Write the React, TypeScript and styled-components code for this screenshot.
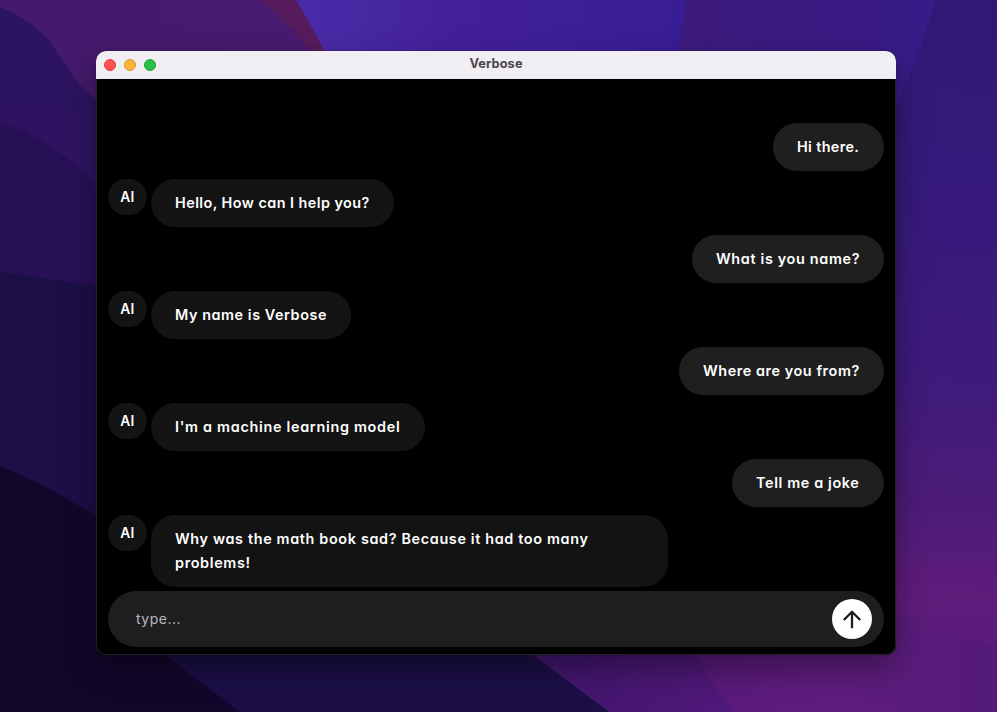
import React from "react";
import styled, { createGlobalStyle } from "styled-components";

const GlobalStyle = createGlobalStyle`
  * { box-sizing: border-box; }
  body { margin: 0; background: #1c0f45; overflow: hidden; }
`;

const Desktop = styled.div`
  display: grid;
  width: 997px;
  height: 712px;
  overflow: hidden;
  font-family: Inter, "Noto Sans", sans-serif;
  > * { grid-area: 1 / 1; }
`;

const WallpaperArt = styled.svg`
  display: block;
  width: 997px;
  height: 712px;
`;

const Window = styled.main`
  z-index: 1;
  margin: 51px 0 0 96px;
  width: 800px;
  height: 604px;
  display: flex;
  flex-direction: column;
  border-radius: 10px;
  overflow: hidden;
  background: #000;
  box-shadow: 0 0 1px rgba(0, 0, 0, 0.7), 0 14px 32px rgba(0, 0, 0, 0.38);
`;

const TitleBar = styled.header`
  display: grid;
  grid-template-columns: 1fr auto 1fr;
  height: 28px;
  flex: none;
  padding: 0 8px;
  align-items: center;
  background: #f0edf3;
`;

const Lights = styled.div`
  display: flex;
  gap: 8px;
`;

const Light = styled.span<{ $fill: string; $edge: string }>`
  width: 12px;
  height: 12px;
  border-radius: 50%;
  background: ${(p) => p.$fill};
  border: 1px solid ${(p) => p.$edge};
`;

const Title = styled.h1`
  margin: 0 0 3px;
  font-size: 12.8px;
  line-height: 16px;
  font-weight: 700;
  letter-spacing: 0.1px;
  color: #4a484d;
`;

const Body = styled.div`
  flex: 1;
  display: flex;
  flex-direction: column;
  gap: 4px;
  padding: 44px 11px 7px;
  border: 1px solid #222;
  border-top: 0;
  border-radius: 0 0 10px 10px;
`;

const Thread = styled.div`
  flex: none;
  display: flex;
  flex-direction: column;
  gap: 8px;
`;

const Row = styled.div<{ $mine: boolean }>`
  display: flex;
  align-items: flex-start;
  gap: 4px;
  justify-content: ${(p) => (p.$mine ? "flex-end" : "flex-start")};
`;

const Avatar = styled.span`
  width: 39px;
  height: 36px;
  padding-bottom: 1px;
  border-radius: 18px;
  flex: none;
  display: flex;
  align-items: center;
  justify-content: center;
  background: #131313;
  color: #fff;
  font-size: 13.8px;
  font-weight: 600;
  letter-spacing: 0.3px;
`;

const Bubble = styled.p<{ $mine: boolean; $width: number; $tracking: number }>`
  margin: 0;
  width: ${(p) => p.$width}px;
  padding: 12px 0 12px 24px;
  border-radius: 24px;
  background: ${(p) => (p.$mine ? "#1f1f1f" : "#131313")};
  color: #fff;
  font-size: 14.4px;
  line-height: 24px;
  font-weight: 600;
  font-feature-settings: "cv11";
  letter-spacing: ${(p) => p.$tracking}px;
  white-space: pre;
`;

const Composer = styled.form`
  flex: none;
  display: flex;
  align-items: center;
  height: 56px;
  padding: 0 12px 0 28px;
  border-radius: 28px;
  background: #1e1e1e;
`;

const Field = styled.input`
  flex: 1;
  padding: 0;
  border: 0;
  outline: 0;
  background: transparent;
  color: #fff;
  font: 400 14px/24px Inter, sans-serif;
  letter-spacing: 0.5px;
  &::placeholder { color: #bab6c3; opacity: 1; }
`;

const Send = styled.button`
  width: 40px;
  height: 40px;
  padding: 0;
  border: 0;
  border-radius: 50%;
  display: flex;
  align-items: center;
  justify-content: center;
  background: #fff;
  color: #1e1e1e;
`;

type Message = { mine: boolean; text: string; width: number; tracking: number };

const messages: Message[] = [
  { mine: true, text: "Hi there.", width: 111, tracking: 0.36 },
  { mine: false, text: "Hello, How can I help you?", width: 243, tracking: 0.45 },
  { mine: true, text: "What is you name?", width: 192, tracking: 0.66 },
  { mine: false, text: "My name is Verbose", width: 200, tracking: 0.56 },
  { mine: true, text: "Where are you from?", width: 205, tracking: 0.57 },
  { mine: false, text: "I'm a machine learning model", width: 274, tracking: 0.7 },
  { mine: true, text: "Tell me a joke", width: 152, tracking: 0.63 },
  { mine: false, text: "Why was the math book sad? Because it had too many\nproblems!", width: 517, tracking: 0.65 },
];

const Wallpaper = () => (
  <WallpaperArt viewBox="0 0 997 712" aria-hidden="true">
    <defs>
      <linearGradient id="plum" x1="0" y1="0" x2="1" y2="0">
        <stop offset="0" stopColor="#431a6c" />
        <stop offset="1" stopColor="#4b1b70" />
      </linearGradient>
      <linearGradient id="blue" gradientUnits="userSpaceOnUse" x1="300" y1="0" x2="690" y2="0">
        <stop offset="0" stopColor="#4a2ca8" />
        <stop offset=".4" stopColor="#43209a" />
        <stop offset="1" stopColor="#371d94" />
      </linearGradient>
      <linearGradient id="indigo" gradientUnits="userSpaceOnUse" x1="680" y1="0" x2="940" y2="0">
        <stop offset="0" stopColor="#3d1b7c" />
        <stop offset="1" stopColor="#381b88" />
      </linearGradient>
      <linearGradient id="right" gradientUnits="userSpaceOnUse" x1="960" y1="0" x2="900" y2="620">
        <stop offset="0" stopColor="#301876" />
        <stop offset=".35" stopColor="#371a7c" />
        <stop offset=".6" stopColor="#3e1b7b" />
        <stop offset=".8" stopColor="#4c1c78" />
        <stop offset="1" stopColor="#621d7c" />
      </linearGradient>
      <linearGradient id="violet" gradientUnits="userSpaceOnUse" x1="560" y1="0" x2="997" y2="0">
        <stop offset="0" stopColor="#441668" />
        <stop offset=".4" stopColor="#5b1b7c" />
        <stop offset=".65" stopColor="#5f1d7f" />
        <stop offset="1" stopColor="#541b78" />
      </linearGradient>
      <linearGradient id="dusk" x1="0" y1="0" x2="0" y2="1">
        <stop offset="0" stopColor="#2b1460" />
        <stop offset="1" stopColor="#321363" />
      </linearGradient>
    </defs>
    <rect width="500" height="300" fill="url(#plum)" />
    <path d="M260 0H300L330 60H318Q292 26 260 0Z" fill="#561b5d" />
    <path d="M296 0H700V100H348Q322 42 296 0Z" fill="url(#blue)" />
    <path d="M686 0H960V150H664Z" fill="url(#indigo)" />
    <path d="M935 0H997V712H850V180L896 108Q922 50 935 0Z" fill="url(#right)" />
    <path d="M850 562Q930 568 997 569V650H850Z" fill="#65197b" opacity=".3" />
    <path d="M850 614Q930 615 997 612V650H850Z" fill="#4b1b7b" opacity=".25" />
    <path d="M480 615H850Q890 620 920 630Q960 640 997 643V712H480Z" fill="url(#violet)" />
    <path d="M500 640H690Q708 685 735 712H500Z" fill="#3f1877" opacity=".35" />
    <path d="M0 7Q35 22 51 43Q62 60 76 80Q86 93 97 101L130 130V350H0Z" fill="url(#dusk)" />
    <path d="M0 122Q50 136 96 186L130 230V350H0Z" fill="#281056" />
    <path d="M0 272L97 286L300 370L510 638L609 712H0Z" fill="#1b0f46" />
    <path d="M0 466Q50 487 96 516L165 655L240 712H0Z" fill="#12072b" />
  </WallpaperArt>
);

export default function App() {
  return (
    <>
      <GlobalStyle />
      <Desktop>
        <Wallpaper />
        <Window>
          <TitleBar>
            <Lights>
              <Light $fill="#ff514f" $edge="#e13d3d" />
              <Light $fill="#fdb339" $edge="#d99429" />
              <Light $fill="#2bc043" $edge="#1fa032" />
            </Lights>
            <Title>Verbose</Title>
          </TitleBar>
          <Body>
            <Thread>
              {messages.map((m) => (
                <Row key={m.text} $mine={m.mine}>
                  {!m.mine && <Avatar>AI</Avatar>}
                  <Bubble $mine={m.mine} $width={m.width} $tracking={m.tracking}>{m.text}</Bubble>
                </Row>
              ))}
            </Thread>
            <Composer onSubmit={(e) => e.preventDefault()}>
              <Field placeholder="type..." aria-label="Message" />
              <Send aria-label="Send">
                <svg width="24" height="24" viewBox="0 0 24 24" fill="none" stroke="currentColor" strokeWidth="2.3" strokeLinejoin="round">
                  <path d="M12 21.2V4.5M3.8 13L12 4.8L20.2 13" />
                </svg>
              </Send>
            </Composer>
          </Body>
        </Window>
      </Desktop>
    </>
  );
}
